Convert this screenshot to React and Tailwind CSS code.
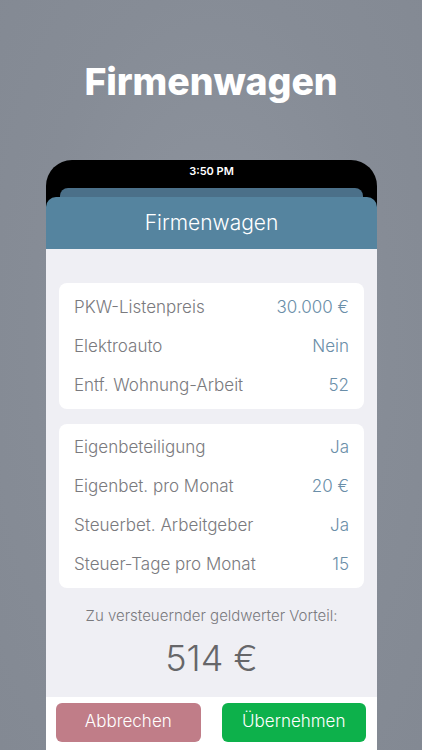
export default function App() {
  const card1 = [
    ["PKW-Listenpreis", "30.000 €"],
    ["Elektroauto", "Nein"],
    ["Entf. Wohnung-Arbeit", "52"],
  ];
  const card2 = [
    ["Eigenbeteiligung", "Ja"],
    ["Eigenbet. pro Monat", "20 €"],
    ["Steuerbet. Arbeitgeber", "Ja"],
    ["Steuer-Tage pro Monat", "15"],
  ];
  const Row = ({ l, v }) => (
    <div className="flex h-[39px] items-center justify-between px-[15px] text-[17px] font-light">
      <span className="text-[#7a7a7e]">{l}</span>
      <span className="text-[#6a8ea8]">{v}</span>
    </div>
  );
  return (
    <div
      className="flex h-[750px] w-[422px] flex-col overflow-hidden bg-[#878d97] bg-[radial-gradient(ellipse_at_50%_45%,#8f959f_0%,#868c96_60%,#838993_100%)]"
      style={{ fontFamily: "Inter, 'Liberation Sans', sans-serif" }}
    >
      <div className="flex h-[160px] items-start justify-center pt-[58px]">
        <h1 className="text-[37.5px] font-extrabold leading-[48px] tracking-[-0.1px] text-white">Firmenwagen</h1>
      </div>
      <div className="ml-[46px] flex w-[331px] flex-1 flex-col overflow-hidden rounded-t-[26px] bg-black">
        <div className="flex h-[21px] items-center justify-center pt-[2px] text-[11px] font-semibold text-white">3:50 PM</div>
        <div className="mx-[14px] mt-[7px] h-[12px] rounded-t-[8px] bg-[#4b7089]" />
        <div className="-mt-[3px] flex h-[52px] items-center justify-center rounded-t-[10px] bg-[#55849f] text-[21px] font-light text-white">
          Firmenwagen
        </div>
        <div className="flex flex-col bg-[#efeff4] px-[13px] pt-[34px]">
          <div className="rounded-[8px] bg-white pt-[5px] pb-[4px]">
            {card1.map(([l, v]) => (
              <Row key={l} l={l} v={v} />
            ))}
          </div>
          <div className="mt-[15px] rounded-[8px] bg-white py-[4px]">
            {card2.map(([l, v]) => (
              <Row key={l} l={l} v={v} />
            ))}
          </div>
          <div className="mt-[17px] text-center text-[15px] font-light text-[#7a7a7e]">
            Zu versteuernder geldwerter Vorteil:
          </div>
          <div className="mt-[8px] h-[61px] text-center text-[36px] font-light leading-[44px] text-[#666669]">514 €</div>
        </div>
        <div className="flex flex-1 gap-[21px] bg-white pt-[6px] pl-[10px] pr-[11px]">
          <div className="flex h-[39px] flex-1 items-center justify-center rounded-[6px] bg-[#c07d88] text-[17px] font-light text-white">
            Abbrechen
          </div>
          <div className="flex h-[39px] flex-1 items-center justify-center rounded-[6px] bg-[#0db14b] text-[17px] font-light text-white">
            Übernehmen
          </div>
        </div>
      </div>
    </div>
  );
}
